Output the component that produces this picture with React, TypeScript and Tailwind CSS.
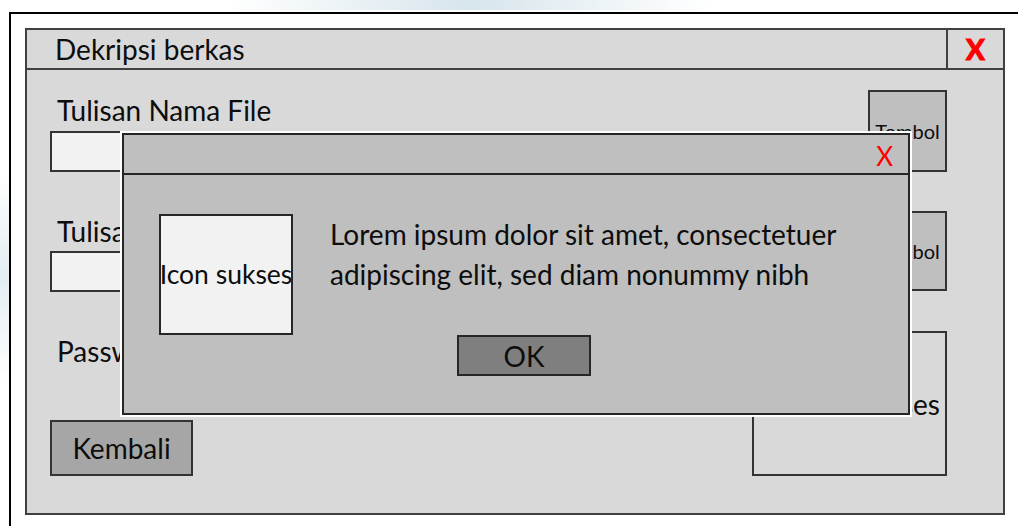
import React from "react";

const ink = "text-[#0d0d0d]";

function FieldRow({
  label,
  labelH,
  tombolClass,
}: {
  label: string;
  labelH: string;
  tombolClass: string;
}) {
  return (
    <div className="flex justify-between items-end">
      <div className="w-[764px] flex flex-col">
        <div className={`${labelH} pl-[7px] whitespace-nowrap`}>{label}</div>
        <div className="h-[41px] border-2 border-[#333333] bg-[#f2f2f2]" />
      </div>
      <div
        className={`${tombolClass} w-[79px] border-2 border-[#333333] bg-[#bfbfbf] flex items-center justify-center text-[20px] whitespace-nowrap`}
      >
        Tombol
      </div>
    </div>
  );
}

function SuccessDialog() {
  return (
    <div className="absolute left-[122px] top-[133px] w-[788px] h-[282px] border-2 border-[#262626] bg-[#bfbfbf] shadow-[0_0_0_2px_#ffffff] flex flex-col">
      <div className="h-[40px] border-b-2 border-[#262626] flex items-center justify-end pr-[15px] pt-[4px] text-[26px] text-[#ff0000]">
        X
      </div>
      <div className="flex pl-[35px] pt-[39px]">
        <div className="w-[134px] h-[121px] shrink-0 border-2 border-[#262626] bg-[#f2f2f2] flex items-center justify-center overflow-hidden whitespace-nowrap text-[26.5px]">
          Icon sukses
        </div>
        <div className="ml-[37px] flex flex-col">
          <div className="leading-[40px] whitespace-nowrap">
            <div>Lorem ipsum dolor sit amet, consectetuer</div>
            <div>adipiscing elit, sed diam nonummy nibh</div>
          </div>
          <button
            type="button"
            className="mt-[41px] ml-[127px] w-[134px] h-[41px] border-2 border-[#262626] bg-[#7f7f7f] flex items-center justify-center"
          >
            OK
          </button>
        </div>
      </div>
    </div>
  );
}

export default function App() {
  return (
    <div
      className={`relative w-[1018px] h-[526px] bg-white overflow-hidden flex flex-col text-[28px] ${ink}`}
      style={{ fontFamily: "Lato, 'Open Sans', sans-serif" }}
    >
      <div className="h-[12px] shrink-0">
        <div className="ml-[230px] w-[480px] h-[10px] bg-linear-to-r from-transparent via-[#d7e5ec] to-transparent" />
      </div>
      <div className="flex flex-1">
        <div className="w-[9px] shrink-0">
          <div className="mt-[160px] h-[210px] bg-linear-to-b from-transparent via-[#e3edf2] to-transparent" />
        </div>
        <div className="flex-1 border-l-2 border-t-2 border-black pl-[14px] pt-[14px]">
          <div className="w-[980px] h-[487px] border-2 border-[#404040] bg-[#d9d9d9] flex flex-col">
            <div className="h-[40px] shrink-0 border-b-2 border-[#404040] flex">
              <div className="flex-1 flex items-center pl-[28px]">Dekripsi berkas</div>
              <div className="w-[57px] border-l-2 border-[#404040] flex items-center justify-center font-bold text-[#ff0000] [-webkit-text-stroke:1.2px_#ff0000]">
                X
              </div>
            </div>
            <div className="flex flex-col pl-[23px] pr-[56px] pt-[20px]">
              <FieldRow
                label="Tulisan Nama File"
                labelH="h-[41px] leading-[41px]"
                tombolClass="h-[82px]"
              />
              <div className="mt-[39px]">
                <FieldRow
                  label="Tulisan Kunci"
                  labelH="h-[40px] leading-[40px]"
                  tombolClass="h-[80px] self-start"
                />
              </div>
              <div className="mt-[39px] flex justify-between items-end">
                <div className="flex flex-col">
                  <div className="h-[41px] leading-[41px] pl-[7px]">Password</div>
                  <button
                    type="button"
                    className="mt-[48px] w-[143px] h-[56px] border-2 border-[#333333] bg-[#a6a6a6] flex items-center justify-center"
                  >
                    Kembali
                  </button>
                </div>
                <div className="w-[195px] h-[145px] border-2 border-[#333333] flex items-center justify-end pr-[5px] overflow-hidden whitespace-nowrap">
                  Icon sukses
                </div>
              </div>
            </div>
          </div>
        </div>
      </div>
      <SuccessDialog />
    </div>
  );
}
